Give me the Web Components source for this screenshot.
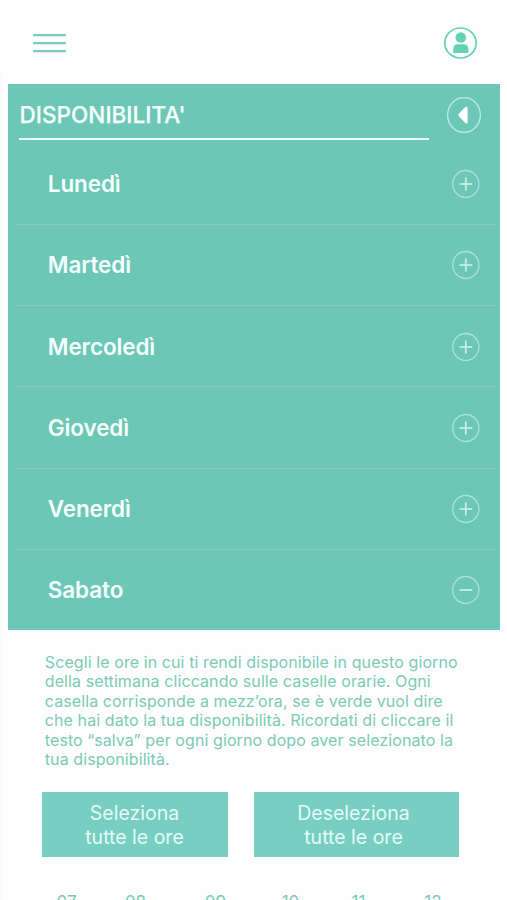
<!DOCTYPE html>
<html lang="it">
  <head>
    <meta charset="UTF-8" />
    <meta name="viewport" content="width=device-width, initial-scale=1.0" />
    <title>Disponibilità</title>
    <style>
      html {
        height: 100%;
        overflow: hidden;
      }
      body {
        margin: 0;
        height: 100%;
        overflow: hidden;
        background: linear-gradient(#f9f9fa, #f9f9fa) 0 72px / 2px 100% no-repeat
          #fefefe;
        color: #7bcbb5;
        font-family: Inter, 'Liberation Sans', sans-serif;
      }
    </style>
  </head>
  <body>
    <template id="app-header">
      <style>
        :host {
          display: flex;
          justify-content: space-between;
          align-items: center;
          box-sizing: border-box;
          height: 84px;
          padding: 2px 29px 0 32px;
        }
        svg {
          display: block;
        }
      </style>
      <svg width="35" height="20" viewBox="0 0 35 20">
        <path
          d="M1 2.2H34M1 10.2H34M1 18.2H34"
          stroke="#7accbd"
          stroke-width="2.2"
        />
      </svg>
      <svg width="35" height="34" viewBox="0 0 35 34">
        <ellipse
          cx="17.5"
          cy="17"
          rx="15.7"
          ry="15"
          fill="none"
          stroke="#63d3b1"
          stroke-width="1.7"
        />
        <circle cx="17.8" cy="11.5" r="5.3" fill="#63d3b1" />
        <path
          d="M10.2 26V23.5Q10.2 18.3 15 18.3H20.8Q25.5 18.3 25.5 23.5V26Q25.5 27 24.5 27H11.2Q10.2 27 10.2 26Z"
          fill="#63d3b1"
        />
      </svg>
    </template>

    <template id="availability-panel">
      <style>
        :host {
          display: block;
          margin: 0 7.5px 0 8px;
          background-color: #6dc7b6;
          color: #f4fffc;
        }
        header {
          display: flex;
          justify-content: space-between;
          align-items: flex-start;
          box-sizing: border-box;
          height: 60px;
          padding: 0 18px 0 11px;
        }
        h1 {
          box-sizing: border-box;
          width: 410px;
          height: 56px;
          margin: 0;
          padding: 17px 0 0 0.6px;
          border-bottom: 2px solid #effffb;
          font-size: 22.5px;
          line-height: 28px;
          font-weight: 500;
          letter-spacing: 0.03px;
          -webkit-text-stroke: 0.25px currentColor;
        }
        svg {
          display: block;
          margin-top: 12px;
        }
      </style>
      <header>
        <h1><slot name="title"></slot></h1>
        <svg width="36" height="38" viewBox="0 0 36 38">
          <ellipse
            cx="18"
            cy="19"
            rx="16.4"
            ry="17.4"
            fill="none"
            stroke="#bdebe1"
            stroke-width="1.3"
          />
          <path
            d="M12.4 18.2L19.3 11Q21.6 9.4 21.6 12V26Q21.6 28.6 19.3 27L12.4 19.8Q11.8 19 12.4 18.2Z"
            fill="#fff"
          />
        </svg>
      </header>
      <slot></slot>
    </template>

    <template id="day-row">
      <style>
        :host {
          display: flex;
          justify-content: space-between;
          align-items: center;
          box-sizing: border-box;
          height: 81.15px;
          padding: 0 19px 0.7px 39.8px;
          background: linear-gradient(#85ccbd, #85ccbd) 6px 100% / 482px 1px
            no-repeat;
          font-size: 22.5px;
          line-height: 28px;
          font-weight: 600;
          letter-spacing: -0.12px;
        }
        :host([open]) {
          height: 80.5px;
          background: none;
        }
        :host([open]) .vertical {
          display: none;
        }
        svg {
          display: block;
        }
      </style>
      <span><slot></slot></span>
      <svg width="30" height="30" viewBox="0 0 30 30" fill="none">
        <ellipse
          cx="14.8"
          cy="15"
          rx="13.1"
          ry="13.5"
          stroke="#ace3d7"
          stroke-width="1.3"
        />
        <path d="M8.5 15H21.3" stroke="#c6f2e8" stroke-width="1.7" />
        <path
          class="vertical"
          d="M14.8 8.4V21.6"
          stroke="#c6f2e8"
          stroke-width="1.7"
        />
      </svg>
    </template>

    <template id="day-hours">
      <style>
        :host {
          display: block;
          padding: 22.8px 48px 0 42px;
        }
        p {
          margin: 0 -20px 22.4px 2.8px;
          font-size: 16px;
          line-height: 19.4px;
          letter-spacing: 0.09px;
          white-space: nowrap;
        }
        .actions {
          display: grid;
          grid-template-columns: 186px 205px;
          justify-content: space-between;
          margin-bottom: 33.5px;
        }
        .hours {
          display: grid;
          grid-template-columns: 59px 79px 81px 69px 67px 82px;
          margin-left: -5px;
          font-size: 17px;
          line-height: 24px;
          text-align: center;
        }
      </style>
      <p><slot name="help"></slot></p>
      <div class="actions"><slot name="action"></slot></div>
      <div class="hours"><slot name="hour"></slot></div>
    </template>

    <template id="hours-button">
      <style>
        :host {
          display: block;
        }
        button {
          display: block;
          width: 100%;
          height: 65px;
          padding: 1px 1px 0 0;
          border: none;
          background-color: #77cec1;
          color: #e4fbf8;
          font: inherit;
          font-size: 19.5px;
          line-height: 24px;
          cursor: pointer;
        }
        :host([wide]) button {
          padding-right: 6px;
        }
      </style>
      <button><slot></slot></button>
    </template>

    <app-header></app-header>
    <availability-panel>
      <span slot="title">DISPONIBILITA'</span>
      <day-row>Lunedì</day-row>
      <day-row>Martedì</day-row>
      <day-row>Mercoledì</day-row>
      <day-row>Giovedì</day-row>
      <day-row>Venerdì</day-row>
      <day-row open>Sabato</day-row>
    </availability-panel>
    <day-hours>
      <span slot="help"
        >Scegli le ore in cui ti rendi disponibile in questo giorno<br />della
        settimana cliccando sulle caselle orarie. Ogni<br />casella corrisponde
        a mezz’ora, se è verde vuol dire<br />che hai dato la tua disponibilità.
        Ricordati di cliccare il<br />testo “salva” per ogni giorno dopo aver
        selezionato la<br />tua disponibilità.</span
      >
      <hours-button slot="action">Seleziona<br />tutte le ore</hours-button>
      <hours-button slot="action" wide
        >Deseleziona<br />tutte le ore</hours-button
      >
      <span slot="hour">07</span>
      <span slot="hour">08</span>
      <span slot="hour">09</span>
      <span slot="hour">10</span>
      <span slot="hour">11</span>
      <span slot="hour">12</span>
    </day-hours>

    <script>
      class TemplateElement extends HTMLElement {
        constructor() {
          super();
          const template = document.getElementById(this.localName);
          this.attachShadow({ mode: 'open' });
          this.shadowRoot.appendChild(template.content.cloneNode(true));
        }
      }

      class DayRow extends TemplateElement {
        connectedCallback() {
          this.shadowRoot.querySelector('svg').addEventListener('click', () => {
            this.toggleAttribute('open');
          });
        }
      }

      customElements.define('app-header', class extends TemplateElement {});
      customElements.define(
        'availability-panel',
        class extends TemplateElement {},
      );
      customElements.define('day-row', DayRow);
      customElements.define('day-hours', class extends TemplateElement {});
      customElements.define('hours-button', class extends TemplateElement {});
    </script>
  </body>
</html>
